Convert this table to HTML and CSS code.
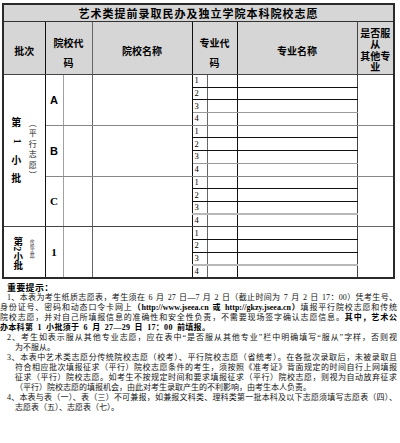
FILE: index.html
```html
<!DOCTYPE html>
<html lang="zh-CN">
<head>
<meta charset="utf-8">
<title>艺术类提前录取民办及独立学院本科院校志愿</title>
<link rel="stylesheet" href="styles.css">
</head>
<body>
<table class="form">
  <colgroup>
    <col class="c1"><col class="c2"><col class="c3"><col class="c4"><col class="c5"><col class="c6"><col class="c7"><col class="c8">
  </colgroup>
  <tr class="trow"><td colspan="8" class="title">艺术类提前录取民办及独立学院本科院校志愿</td></tr>
  <tr class="hrow">
    <th class="h hb bk">批次</th>
    <th colspan="2" class="h hc g5">院校代<br>码</th>
    <th class="h hb bk">院校名称</th>
    <th colspan="2" class="h hc bk">专业代<br>码</th>
    <th class="h hb g4">专业名称</th>
    <th class="h hs">是否服
从
其他专
业</th>
  </tr>

  <tr class="r">
    <td rowspan="12" class="batch bk b4"><div class="vt"><div class="vmain"><span>第</span><span class="rot">1</span><span>小</span><span>批</span></div><div class="vsub">（平行志愿）</div></div></td>
    <td rowspan="4" class="let g9 bg8">A</td>
    <td rowspan="4" class="g5 bg8"></td>
    <td rowspan="4" class="bk bg8"></td>
    <td class="num g5 bb">1</td><td class="bk bb"></td><td class="g4 bb"></td>
    <td rowspan="4" class="last bg8"></td>
  </tr>
  <tr class="r"><td class="num g5 bb">2</td><td class="bk bb"></td><td class="g4 bb"></td></tr>
  <tr class="r"><td class="num g5 bg9">3</td><td class="bk bg9"></td><td class="g4 bg9"></td></tr>
  <tr class="r"><td class="num g5 bg8">4</td><td class="bk bg8"></td><td class="g4 bg8"></td></tr>

  <tr class="r">
    <td rowspan="4" class="let g9 bg8">B</td>
    <td rowspan="4" class="g5 bg8"></td>
    <td rowspan="4" class="bk bg8"></td>
    <td class="num g5 bb">1</td><td class="bk bb"></td><td class="g4 bb"></td>
    <td rowspan="4" class="last bg8"></td>
  </tr>
  <tr class="r"><td class="num g5 bb">2</td><td class="bk bb"></td><td class="g4 bb"></td></tr>
  <tr class="r"><td class="num g5 bg9">3</td><td class="bk bg9"></td><td class="g4 bg9"></td></tr>
  <tr class="r"><td class="num g5 bg8">4</td><td class="bk bg8"></td><td class="g4 bg8"></td></tr>

  <tr class="r">
    <td rowspan="4" class="let serif g9 b4">C</td>
    <td rowspan="4" class="g5 b4"></td>
    <td rowspan="4" class="bk b4"></td>
    <td class="num g5 bb">1</td><td class="bk bb"></td><td class="g4 bb"></td>
    <td rowspan="4" class="last b6"></td>
  </tr>
  <tr class="r"><td class="num g5 bb">2</td><td class="bk bb"></td><td class="g4 bb"></td></tr>
  <tr class="r"><td class="num g5 bl">3</td><td class="bk bl"></td><td class="g4 bl"></td></tr>
  <tr class="r"><td class="num g5 b4">4</td><td class="bk b4"></td><td class="g4 b4"></td></tr>

  <tr class="r">
    <td rowspan="4" class="batch bk"><div class="vt vt2"><div class="vmain2">第2小批</div><div class="vsub2">（传统志愿）</div></div></td>
    <td rowspan="4" class="let serif g9">1</td>
    <td rowspan="4" class="g5"></td>
    <td rowspan="4" class="bk"></td>
    <td class="num g5 bb">1</td><td class="bk bb"></td><td class="g4 bb"></td>
    <td rowspan="4" class="last"></td>
  </tr>
  <tr class="r"><td class="num g5 bb">2</td><td class="bk bb"></td><td class="g4 bb"></td></tr>
  <tr class="r"><td class="num g5 bl">3</td><td class="bk bl"></td><td class="g4 bl"></td></tr>
  <tr class="r"><td class="num g5">4</td><td class="bk"></td><td class="g4"></td></tr>
</table>

<div class="notes">
  <div class="nt">重要提示：</div>
  <div class="ln j i1">1、本表为考生纸质志愿表，考生须在 6 月 27 日—7 月 2 日（截止时间为 7 月 2 日 17：00）凭考生号、</div>
  <div class="ln j">身份证号、密码和动态口令卡网上<b>（http://www.jseea.cn 或 http://gkzy.jseea.cn）</b>填报平行院校志愿和传统</div>
  <div class="ln j">院校志愿，并对自己所填报信息的准确性和安全性负责，不需要现场签字确认志愿信息。<b>其中，艺术公</b></div>
  <div class="ln bold">办本科第 1 小批须于 6 月 27—29 日 17：00 前填报。</div>
  <div class="ln j i1">2、考生如表示服从其他专业志愿，应在表中“是否服从其他专业”栏中明确填写“服从”字样，否则视</div>
  <div class="ln i2">为不服从。</div>
  <div class="ln j i1">3、本表中艺术类志愿分传统院校志愿（校考）、平行院校志愿（省统考）。在各批次录取后，未被录取且</div>
  <div class="ln j i2">符合相应批次填报征求（平行）院校志愿条件的考生，须按照《准考证》背面规定的时间自行上网填报</div>
  <div class="ln j i2">征求（平行）院校志愿。如考生不按规定时间和要求填报征求（平行）院校志愿，则视为自动放弃征求</div>
  <div class="ln i2">（平行）院校志愿的填报机会，由此对考生录取产生的不利影响，由考生本人负责。</div>
  <div class="ln j i1">4、本表与表（一）、表（三）不可兼报，如兼报文科类、理科类第一批本科及以下志愿须填写志愿表（四）、</div>
  <div class="ln i2">志愿表（五）、志愿表（七）。</div>
</div>
</body>
</html>
```

FILE: styles.css
```css
html, body {
  margin: 0;
  padding: 0;
  background: #ffffff;
}
body {
  width: 400px;
  height: 443px;
  overflow: hidden;
  color: #000;
  font-family: "Liberation Serif", "Noto Sans CJK SC", serif;
}

.form {
  margin: 3px 0 0 2px;
  width: 391px;
  table-layout: fixed;
  border-collapse: collapse;
  border: 2px solid #2a2a2a;
}
.c1 { width: 42px; }
.c2 { width: 18px; }
.c3 { width: 29px; }
.c4 { width: 100px; }
.c5 { width: 15px; }
.c6 { width: 30px; }
.c7 { width: 120px; }
.c8 { width: 37px; }

.form td, .form th {
  padding: 0;
  border-top: none;
  border-left: none;
  border-right: 1px solid #222;
  border-bottom: 1px solid #222;
}

.trow { height: 17px; }
.title {
  background: #d6d6d6;
  text-align: center;
  font-family: "Noto Sans CJK SC", sans-serif;
  font-weight: 700;
  font-size: 11px;
  letter-spacing: 1px;
  line-height: 16px;
  border-bottom: 1px solid #333 !important;
}

.hrow { height: 53px; }
.h {
  background: #d6d6d6;
  font-family: "Noto Sans CJK SC", sans-serif;
  font-weight: 700;
  font-size: 10px;
  text-align: center;
  vertical-align: middle;
  border-bottom: 1px solid #444 !important;
}
.hb { padding-top: 6px !important; line-height: 14px; }
.hc { padding-top: 10px !important; line-height: 20px; }
.hs {
  padding-top: 3px !important;
  line-height: 11.5px;
  white-space: pre-line;
}

.r { height: 12.7px; }

/* vertical borders */
.bk { border-right-color: #111 !important; }
.g4 { border-right-color: #444 !important; }
.g5 { border-right-color: #666 !important; }
.g9 { border-right-color: #a0a0a0 !important; }
.last { border-right: none; }

/* horizontal borders */
.form .bb { border-bottom-color: #111; }
.form .bg9 { border-bottom-color: #9a9a9a; }
.form .bg8 { border-bottom-color: #888; }
.form .bl { border-bottom: 2px solid #b8b8b8; }
.form .b4 { border-bottom-color: #444; }
.form .b6 { border-bottom-color: #666; }

.batch { vertical-align: middle; }
.vt {
  display: flex;
  justify-content: center;
  align-items: center;
  gap: 7px;
  padding-right: 1px;
}
.vmain {
  display: flex;
  flex-direction: column;
  align-items: center;
  width: 10px;
  font-family: "Noto Sans CJK SC", sans-serif;
  font-weight: 700;
  font-size: 10px;
  line-height: 18.7px;
}
.rot {
  display: inline-block;
  transform: rotate(90deg);
  font-family: "Liberation Serif", serif;
  font-weight: 700;
}
.vsub {
  writing-mode: vertical-rl;
  font-family: "Noto Sans CJK SC", sans-serif;
  font-size: 8px;
  line-height: 8px;
  letter-spacing: 2.4px;
  color: #222;
}
.vt2 {
  align-items: flex-start;
  gap: 7px;
}
.vmain2 {
  writing-mode: vertical-rl;
  font-family: "Liberation Serif", "Noto Sans CJK SC", serif;
  font-weight: 700;
  font-size: 9.5px;
  line-height: 10px;
  margin-top: 3px;
}
.vsub2 {
  writing-mode: vertical-rl;
  font-family: "Noto Sans CJK SC", sans-serif;
  font-size: 4.5px;
  line-height: 6px;
  letter-spacing: -0.3px;
  margin-top: 2px;
  color: #333;
}

.let {
  text-align: center;
  vertical-align: middle;
  font-family: "Liberation Sans", sans-serif;
  font-weight: 700;
  font-size: 11px;
}
.let.serif {
  font-family: "Liberation Serif", serif;
}

.num {
  font-family: "Liberation Serif", serif;
  font-size: 8.5px;
  line-height: 9px;
  padding-left: 2px !important;
  text-align: left;
  vertical-align: middle;
}

/* notes */
.notes {
  margin-top: 3px;
  width: 397px;
  font-family: "Liberation Serif", "Noto Sans CJK SC", serif;
}
.nt {
  padding-left: 7px;
  font-family: "Noto Sans CJK SC", sans-serif;
  font-weight: 700;
  font-size: 9px;
  line-height: 11px;
  letter-spacing: 0.3px;
}
.ln {
  font-size: 8px;
  line-height: 10px;
  height: 10px;
  white-space: nowrap;
  word-spacing: 1px;
  color: #111;
}
.ln b { font-weight: 700; color: #000; }
.ln.bold {
  font-weight: 700;
  color: #000;
  letter-spacing: 0.3px;
  word-spacing: 2px;
}
.j {
  text-align: justify;
  text-align-last: justify;
}
.i1 { padding-left: 7px; }
.i2 { padding-left: 15px; }
```
